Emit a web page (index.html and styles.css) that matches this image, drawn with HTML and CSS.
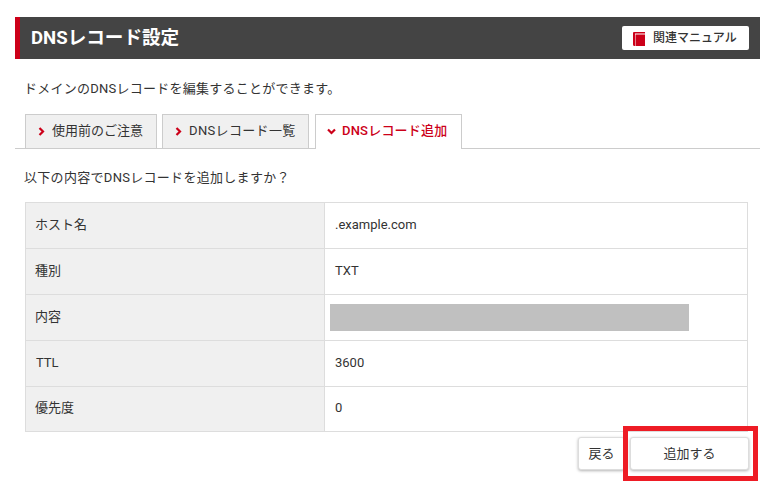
FILE: index.html
```html
<!DOCTYPE html>
<html lang="ja">
<head>
<meta charset="utf-8">
<title>DNSレコード設定</title>
<link rel="stylesheet" href="styles.css">
</head>
<body>
<main class="page">
  <header class="head">
    <h1 class="head-title">DNSレコード設定</h1>
    <a class="manual" href="#">
      <svg class="manual-icon" width="12" height="14" viewBox="0 0 12 14"><path fill="#cc0019" d="M1 0h11v1.500H2v12.500H1.500Q0 14 0 12.500V1Q0 0 1 0z"/><rect fill="#cc0019" x="2.500" y="2.500" width="9.500" height="11.500"/></svg>
      <span>関連マニュアル</span>
    </a>
  </header>
  <p class="lead">ドメインのDNSレコードを編集することができます。</p>
  <nav class="tabs">
    <a class="tab tab-first" href="#"><svg class="chev" width="7" height="9" viewBox="0 0 7 9"><path d="M1.500 1l3.500 3.500L1.500 8" fill="none" stroke="#cc0019" stroke-width="2.200"/></svg>使用前のご注意</a>
    <a class="tab tab-list" href="#"><svg class="chev" width="7" height="9" viewBox="0 0 7 9"><path d="M1.500 1l3.500 3.500L1.500 8" fill="none" stroke="#cc0019" stroke-width="2.200"/></svg>DNSレコード一覧</a>
    <a class="tab tab-active" href="#"><svg class="chev" width="9" height="7" viewBox="0 0 9 7"><path d="M1 1.500l3.500 3.500L8 1.500" fill="none" stroke="#cc0019" stroke-width="2.200"/></svg>DNSレコード追加</a>
  </nav>
  <p class="question">以下の内容でDNSレコードを追加しますか？</p>
  <table class="info">
    <tr><th>ホスト名</th><td>.example.com</td></tr>
    <tr><th>種別</th><td>TXT</td></tr>
    <tr><th>内容</th><td class="masked-cell"><div class="masked"></div></td></tr>
    <tr><th class="th-latin">TTL</th><td>3600</td></tr>
    <tr class="last-row"><th>優先度</th><td>0</td></tr>
  </table>
  <div class="actions">
    <button class="btn btn-back">戻る</button>
    <button class="btn btn-add">追加する</button>
    <div class="highlight"></div>
  </div>
</main>
</body>
</html>
```

FILE: styles.css
```css
* { box-sizing: border-box; }
html, body { margin: 0; padding: 0; background: #fff; overflow: hidden; }
body {
  width: 777px;
  height: 484px;
  font-family: Roboto, "Noto Sans CJK JP", sans-serif;
  font-size: 13px;
  color: #333;
}
.page { width: 745px; margin-left: 15px; padding-top: 17px; }
.head {
  height: 42px;
  background: #444;
  border-left: 5px solid #cc0019;
  padding: 0 11px;
  display: flex;
  align-items: center;
  justify-content: space-between;
}
.head-title { margin: 0 0 5px; font-size: 18.600px; font-weight: 700; color: #fff; }
.manual {
  width: 127px;
  height: 24px;
  background: #fff;
  border-radius: 2px;
  display: flex;
  align-items: center;
  padding: 0 0 0 11px;
  gap: 8px;
  font-size: 12px;
  font-weight: 500;
  color: #333;
  text-decoration: none;
}
.manual span { margin-bottom: 3px; }
.manual-icon { flex: none; margin-top: 2px; }
.lead { margin: 0; padding: 20px 0 0 9px; height: 55px; line-height: 20px; letter-spacing: 0.250px; }
.tabs {
  display: flex;
  height: 35px;
  padding-left: 10px;
  gap: 5px;
  border-bottom: 1px solid #ccc;
}
.tab {
  height: 34px;
  width: 147px;
  background: #f0f0f0;
  border: 1px solid #ccc;
  border-bottom: 0;
  display: flex;
  align-items: center;
  padding: 0 0 3px 12px;
  gap: 7px;
  color: #333;
  text-decoration: none;
  font-size: 13px;
  line-height: 1;
}
.tab-first { width: 132px; }
.tab-list { letter-spacing: 0.350px; }
.tab-active {
  height: 35px;
  background: #fff;
  color: #cc0019;
  font-weight: 500;
  letter-spacing: 0.200px;
  padding: 0 0 4px 11px;
  gap: 6px;
  margin-left: 1px;
}
.chev { flex: none; margin-top: 3px; }
.question { margin: 0; padding: 20px 0 0 9px; height: 53px; line-height: 18px; letter-spacing: 0.300px; }
.info {
  width: 723px;
  margin-left: 10px;
  border-collapse: collapse;
  table-layout: fixed;
}
.info th, .info td {
  border: 1px solid #ddd;
  height: 46px;
  padding: 0 10px 3px;
  text-align: left;
  font-weight: 400;
  font-size: 13px;
}
.info th { width: 299px; background: #f0f0f0; padding: 0 10px 5px 9px; }
.info .th-latin { padding: 0 10px 2px; }
.info .last-row th, .info .last-row td { height: 45px; }
.info .masked-cell { padding: 0 5px; }
.masked { width: 359px; height: 27px; background: #c0c0c0; }
.actions {
  position: relative;
  display: flex;
  justify-content: flex-end;
  gap: 5px;
  width: 734px;
  padding-top: 5px;
}
.btn {
  height: 33px;
  background: #fff;
  border: 1px solid #ddd;
  border-radius: 3px;
  box-shadow: 0 1px 3px rgba(0,0,0,.3);
  font-family: inherit;
  font-size: 13px;
  color: #333;
  padding: 0 0 3px;
}
.btn-back { width: 47px; }
.btn-add { width: 119px; }
.highlight {
  position: absolute;
  left: 608px;
  top: -6px;
  width: 135px;
  height: 55px;
  border: 5px solid #ee1c25;
}
```
